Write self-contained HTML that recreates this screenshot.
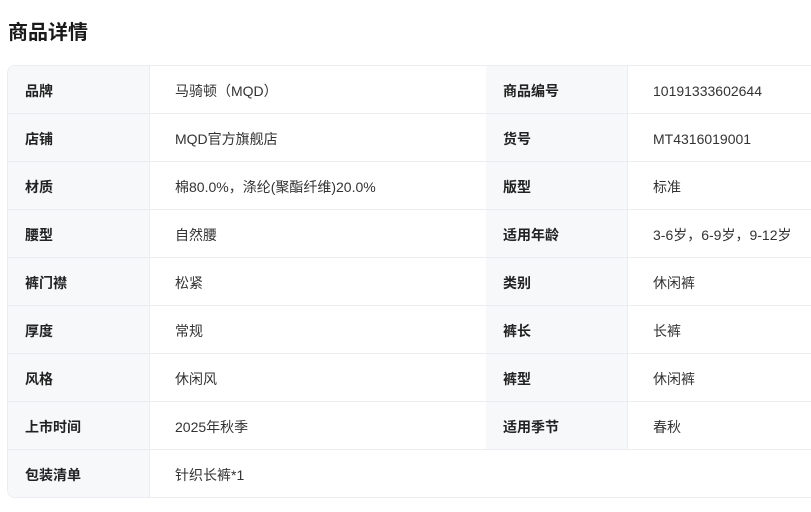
<!DOCTYPE html>
<html><head><meta charset="utf-8"><style>
body{margin:0;background:#fff;font-family:"Liberation Sans","Noto Sans CJK SC",sans-serif;color:#222;width:811px;height:512px;overflow:hidden;position:relative}
h1{position:absolute;left:8px;top:19px;margin:0;font-size:20px;font-weight:bold;line-height:28px;color:#1a1a1a}
.t{position:absolute;left:7px;top:65px;width:840px;border:1px solid #ebedf0;border-radius:8px;overflow:hidden}
.r{display:flex;height:47px;border-bottom:1px solid #ebedf0}
.r:last-child{border-bottom:none}
.l{width:142px;background:#f7f8fa;border-right:1px solid #ebedf0;font-weight:bold;font-size:14px;line-height:47px;padding:2px 0 0 17px;box-sizing:border-box;flex:none}
.v{font-size:14px;line-height:47px;padding:2px 0 0 25px;box-sizing:border-box;color:#333;flex:none}
.v1{width:336px}.v2{width:220px}
</style></head><body>
<h1>商品详情</h1>
<div class="t">
<div class="r"><div class="l">品牌</div><div class="v v1">马骑顿（MQD）</div><div class="l">商品编号</div><div class="v v2">10191333602644</div></div>
<div class="r"><div class="l">店铺</div><div class="v v1">MQD官方旗舰店</div><div class="l">货号</div><div class="v v2">MT4316019001</div></div>
<div class="r"><div class="l">材质</div><div class="v v1">棉80.0%，涤纶(聚酯纤维)20.0%</div><div class="l">版型</div><div class="v v2">标准</div></div>
<div class="r"><div class="l">腰型</div><div class="v v1">自然腰</div><div class="l">适用年龄</div><div class="v v2">3-6岁，6-9岁，9-12岁</div></div>
<div class="r"><div class="l">裤门襟</div><div class="v v1">松紧</div><div class="l">类别</div><div class="v v2">休闲裤</div></div>
<div class="r"><div class="l">厚度</div><div class="v v1">常规</div><div class="l">裤长</div><div class="v v2">长裤</div></div>
<div class="r"><div class="l">风格</div><div class="v v1">休闲风</div><div class="l">裤型</div><div class="v v2">休闲裤</div></div>
<div class="r"><div class="l">上市时间</div><div class="v v1">2025年秋季</div><div class="l">适用季节</div><div class="v v2">春秋</div></div>
<div class="r"><div class="l">包装清单</div><div class="v v1">针织长裤*1</div></div>
</div>
</body></html>
